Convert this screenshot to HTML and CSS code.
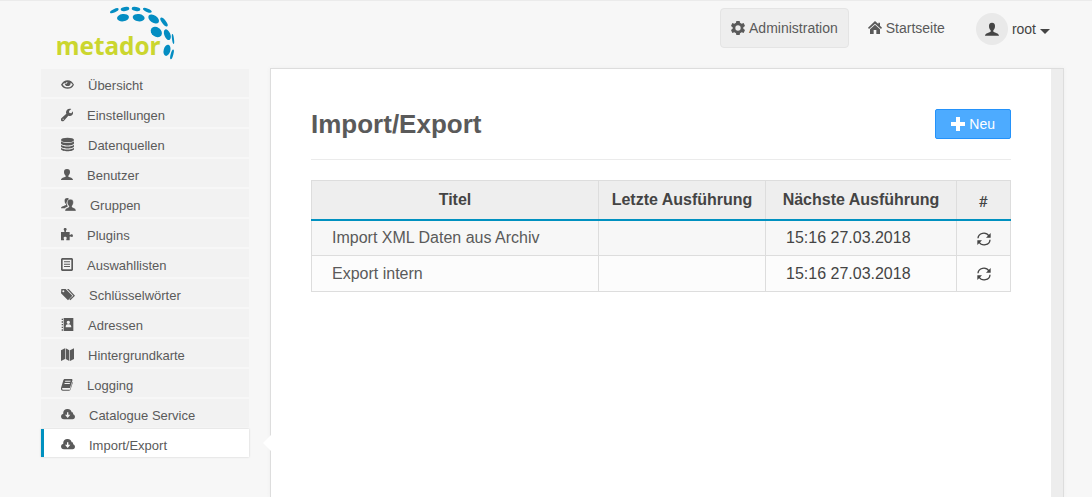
FILE: index.html
```html
<!DOCTYPE html>
<html lang="de">
<head>
    <meta charset="UTF-8">
    <meta name="viewport" content="width=device-width, initial-scale=1.0">
    <title>Metador - Import/Export</title>
    <link rel="stylesheet" href="styles.css">
</head>
<body>
<header class="header">
    <a class="logo" href="#">
        <svg width="120" height="57" viewBox="48 15 360 171">
            <g fill="#048dc2">
                <ellipse cx="223" cy="32" rx="14" ry="5" transform="rotate(-25 223 32)"/>
                <ellipse cx="255" cy="27" rx="13" ry="6" transform="rotate(-10 255 27)"/>
                <ellipse cx="288" cy="27" rx="13" ry="6" transform="rotate(10 288 27)"/>
                <ellipse cx="322" cy="31" rx="14" ry="5" transform="rotate(22 322 31)"/>
                <ellipse cx="249" cy="53" rx="18" ry="11" transform="rotate(-8 249 53)"/>
                <ellipse cx="296" cy="53" rx="18" ry="11" transform="rotate(8 296 53)"/>
                <ellipse cx="341" cy="57" rx="18" ry="11" transform="rotate(35 341 57)"/>
                <ellipse cx="372" cy="66" rx="16" ry="6" transform="rotate(52 372 66)"/>
                <ellipse cx="349" cy="96" rx="18" ry="14" transform="rotate(35 349 96)"/>
                <ellipse cx="382" cy="104" rx="17" ry="9" transform="rotate(68 382 104)"/>
                <ellipse cx="399" cy="117" rx="15" ry="3" transform="rotate(83 399 117)"/>
                <ellipse cx="381" cy="151" rx="17" ry="10" transform="rotate(-75 381 151)"/>
                <ellipse cx="396" cy="163" rx="15" ry="4" transform="rotate(-75 396 163)"/>
            </g>
            <text class="logo-text" x="47" y="166">metador</text>
        </svg>
    </a>
    <nav class="top-nav">
        <a class="top-link active" href="#">
            <svg width="14" height="14" viewBox="0 0 42 42"><path fill="currentColor" fill-rule="evenodd" d="M16 0h10l1 5 5 3 6-2 4 9-5 4v4l5 4-4 9-6-2-5 3-1 5H16l-1-5-5-3-6 2-4-9 5-4v-4l-5-4 4-9 6 2 5-3zM21 13a8 8 0 1 0 0 16 8 8 0 1 0 0-16z"/></svg>
            Administration
        </a>
        <a class="top-link" href="#">
            <svg width="14" height="14" viewBox="0 0 42 42"><path fill="currentColor" d="M21 0l10 9V5h5v9l6 6-3 4L21 8 3 24l-3-4zM21 11l15 14v14H25V27h-8v12H6V25z"/></svg>
            Startseite
        </a>
    </nav>
    <button class="user-menu" type="button">
        <span class="avatar">
            <svg width="14" height="14" viewBox="0 0 42 42"><path fill="currentColor" d="M21 2c7 0 9 5 9 10 0 6-2 10-5 13v4c5 3 16 4 17 12H0c1-8 12-9 17-12v-4c-3-3-5-7-5-13 0-5 2-10 9-10z"/></svg>
        </span>
        root
        <span class="caret"></span>
    </button>
</header>

<div class="wrapper">
    <nav class="sidebar">
        <a class="item" href="#">
            <svg width="13" height="15" viewBox="0 0 39 45"><path fill="currentColor" fill-rule="evenodd" d="M0 23C5 14 12 10 20 10s14 4 19 13c-5 9-11 12-19 12S5 32 0 23zm5 0c4 5 8 8 15 8s11-3 15-8c-2-3-4-5-6-6a9 10 0 1 1-18 0c-2 1-4 3-6 6zm14-8c-4 0-6 3-6 6h3c0-2 1-3 3-3z"/></svg>
            Übersicht
        </a>
        <a class="item" href="#">
            <svg width="12" height="15" viewBox="0 0 36 45"><path fill="currentColor" fill-rule="evenodd" d="M31 6l-7 6 1 6 6 1 5-6c2 10-5 17-14 13L9 41c-6 5-12-1-8-7l15-14C12 11 21 2 31 6zM5 35v3h3v-3z"/></svg>
            Einstellungen
        </a>
        <a class="item" href="#">
            <svg width="13" height="15" viewBox="0 0 39 45"><g fill="currentColor"><ellipse cx="19.500" cy="9" rx="19.500" ry="7"/><path d="M0 13c5 7 34 7 39 0v6c0 9-39 9-39 0zM0 23c5 7 34 7 39 0v5c0 9-39 9-39 0zM0 32c5 7 34 7 39 0v4c0 9-39 9-39 0z"/></g></svg>
            Datenquellen
        </a>
        <a class="item" href="#">
            <svg width="12" height="15" viewBox="0 0 36 45"><path fill="currentColor" d="M18 6c7 0 9 4 9 9 0 5-2 8-5 11v3c5 2 14 3 14 10H0c0-7 9-8 14-10v-3c-3-3-5-6-5-11 0-5 2-9 9-9z"/></svg>
            Benutzer
        </a>
        <a class="item" href="#">
            <svg width="15" height="15" viewBox="0 0 45 45"><g fill="currentColor"><path d="M19 3c-6 0-9 4-8 9 0 4 1 7 4 9v3C11 27 0 27 0 34h12c2-3 6-4 9-6-6-6-6-16 3-22-1-2-3-3-5-3z"/><path d="M28 7c7 0 9 4 9 9 0 5-2 9-4 11v3c4 3 12 3 12 12H12c0-9 8-9 12-12v-3c-3-2-5-6-5-11 0-5 2-9 9-9z" stroke="#f2f2f2" stroke-width="1"/></g></svg>
            Gruppen
        </a>
        <a class="item" href="#">
            <svg width="12" height="15" viewBox="0 0 36 45"><path fill="currentColor" d="M0 15h10c1-4-2-5-2-8 0-5 9-5 9 0 0 3-3 4-2 8h11v9c3 1 3-2 6-2 5 0 5 8 0 8-3 0-3-2-6-1v11H16c-1-4 2-5 1-8-1-4-8-4-9 0-1 3 2 4 1 8H0z"/></svg>
            Plugins
        </a>
        <a class="item" href="#">
            <svg width="12" height="15" viewBox="0 0 36 45"><path fill="currentColor" fill-rule="evenodd" d="M3 3h30l3 3v33l-3 3H3l-3-3V6zm2 5v29h26V8zM9 13h18v3H9zm0 7h18v3H9zm0 7h18v3H9z"/></svg>
            Auswahllisten
        </a>
        <a class="item" href="#">
            <svg width="14" height="15" viewBox="0 0 42 45"><path fill="currentColor" fill-rule="evenodd" d="M1 6h13l20 20-13 14L0 19zm6 4a3 3 0 1 0 0 6 3 3 0 1 0 0-6zM18 6h5l19 20-14 14-3-3 12-11z"/></svg>
            Schlüsselwörter
        </a>
        <a class="item" href="#">
            <svg width="13" height="15" viewBox="0 0 39 45"><path fill="currentColor" fill-rule="evenodd" d="M8 3h29v39H8zm14 8a5 5 0 1 0 0 10 5 5 0 1 0 0-10zM14 31h17c0-6-3-8-7-9h-4c-4 1-6 3-6 9zM2 5h4v4H2zm0 8h4v4H2zm0 8h4v4H2zm0 8h4v4H2zm0 8h4v4H2z"/></svg>
            Adressen
        </a>
        <a class="item" href="#">
            <svg width="13" height="15" viewBox="0 0 39 45"><path fill="currentColor" d="M0 10l12-6v32L0 42zM14 4l11 6v32l-11-6zM27 10l12-6v32l-12 6z"/></svg>
            Hintergrundkarte
        </a>
        <a class="item" href="#">
            <svg width="12" height="15" viewBox="0 0 36 45"><path fill="currentColor" fill-rule="evenodd" d="M11 6h20c3 0 4 2 3 5l-7 22H4c-2 3 0 5 2 5h21l7-22 2-1-7 22c-1 2-2 4-5 4H5c-4 0-6-4-5-8L7 10c1-2 2-4 4-4zm2 5l-1 3h16l1-3zm-2 7l-1 3h16l1-3z"/></svg>
            Logging
        </a>
        <a class="item" href="#">
            <svg width="14" height="15" viewBox="0 0 42 45"><path fill="currentColor" fill-rule="evenodd" d="M9 37C-2 37-3 22 7 20 5 11 13 5 20 6c7 0 11 4 12 10 4 0 5 2 4 6 9 2 7 15-1 15zm9-21v7h-6l8 10 8-10h-6v-7z"/></svg>
            Catalogue Service
        </a>
        <a class="item active" href="#">
            <svg width="14" height="15" viewBox="0 0 42 45"><path fill="currentColor" fill-rule="evenodd" d="M9 37C-2 37-3 22 7 20 5 11 13 5 20 6c7 0 11 4 12 10 4 0 5 2 4 6 9 2 7 15-1 15zm9-21v7h-6l8 10 8-10h-6v-7z"/></svg>
            Import/Export
        </a>
    </nav>

    <main class="content">
        <div class="title-bar">
            <h1>Import/Export</h1>
            <button class="btn" type="button">
                <svg width="14" height="14" viewBox="0 0 14 14"><path fill="currentColor" d="M5 0h4v5h5v4H9v5H5V9H0V5h5z"/></svg>
                Neu
            </button>
        </div>
        <table class="table">
            <thead>
            <tr>
                <th>Titel</th>
                <th class="col-last">Letzte Ausführung</th>
                <th class="col-next">Nächste Ausführung</th>
                <th class="col-action">#</th>
            </tr>
            </thead>
            <tbody>
            <tr>
                <td><a href="#">Import XML Daten aus Archiv</a></td>
                <td></td>
                <td>15:16 27.03.2018</td>
                <td class="action">
                    <button class="refresh" type="button" aria-label="Ausführen">
                        <svg width="14" height="14" viewBox="0 0 42 42"><g fill="none" stroke="currentColor" stroke-width="4"><path d="M3 19C4 2 27-2 36 12"/><path d="M39 23c-1 17-24 21-33 7"/></g><path fill="currentColor" d="M41 3v14H27zM1 39V25h14z"/></svg>
                    </button>
                </td>
            </tr>
            <tr>
                <td><a href="#">Export intern</a></td>
                <td></td>
                <td>15:16 27.03.2018</td>
                <td class="action">
                    <button class="refresh" type="button" aria-label="Ausführen">
                        <svg width="14" height="14" viewBox="0 0 42 42"><g fill="none" stroke="currentColor" stroke-width="4"><path d="M3 19C4 2 27-2 36 12"/><path d="M39 23c-1 17-24 21-33 7"/></g><path fill="currentColor" d="M41 3v14H27zM1 39V25h14z"/></svg>
                    </button>
                </td>
            </tr>
            </tbody>
        </table>
    </main>
</div>
</body>
</html>
```

FILE: styles.css
```css
* {
    box-sizing: border-box;
}
body {
    display: flex;
    flex-direction: column;
    min-height: 100vh;
    margin: 0;
    border-top: 1px solid #ebebeb;
    background-color: #f7f7f7;
    color: #444;
    font-family: "Liberation Sans", Arial, sans-serif;
    font-size: 14px;
}
a {
    color: #5a5a5a;
    text-decoration: none;
}
button {
    font: inherit;
    color: inherit;
    cursor: pointer;
}
svg {
    flex: none;
}

/* header */
.header {
    display: flex;
    align-items: flex-start;
    height: 67px;
    padding: 4px 42px 0 56px;
}
.logo svg {
    display: block;
}
.logo-text {
    fill: #cbd62f;
    font-family: "Noto Sans", sans-serif;
    font-size: 73px;
    font-weight: bold;
}
.top-nav {
    display: flex;
    gap: 8px;
    margin: 3px 20px 0 auto;
}
.top-link {
    display: flex;
    align-items: center;
    gap: 4px;
    height: 40px;
    padding: 0 10px;
    border: 1px solid transparent;
    border-radius: 4px;
}
.top-link.active {
    border-color: #e4e4e4;
    background-color: #eee;
}
.user-menu {
    display: flex;
    align-items: center;
    gap: 4px;
    margin-top: 8px;
    padding: 0;
    border: 0;
    background: none;
}
.avatar {
    display: flex;
    align-items: center;
    justify-content: center;
    width: 32px;
    height: 32px;
    border-radius: 50%;
    background-color: #e9e9e9;
}
.caret {
    margin-top: 4px;
    border: 5px solid transparent;
    border-top-color: currentColor;
    border-bottom: 0;
}

/* layout */
.wrapper {
    display: flex;
    flex: 1;
    gap: 21px;
    padding: 0 28px 0 41px;
}
.sidebar {
    display: flex;
    flex: none;
    flex-direction: column;
    gap: 2px;
    width: 208px;
    padding-top: 1px;
}
.item {
    position: relative;
    display: flex;
    align-items: center;
    gap: 14px;
    height: 28px;
    padding: 4px 0 0 20px;
    background-color: #f2f2f2;
    font-size: 13px;
}
.item svg {
    margin-bottom: 2px;
}
.item.active {
    padding-left: 17px;
    border-left: 3px solid #0091c0;
    background-color: #fff;
    box-shadow: 0 0 2px #ccc;
}
.item.active::after {
    content: "";
    position: absolute;
    top: 6px;
    left: calc(100% + 14px);
    border: 8px solid transparent;
    border-right-color: #fff;
    border-left: 0;
}
.content {
    flex: 1;
    padding: 40px 53px 40px 40px;
    border: 1px solid #ddd;
    border-right: 0;
    border-bottom: 0;
    background-color: #fff;
    box-shadow: inset -1px 0 #ddd, inset -13px 0 #ededed, 0 0 4px #eee;
}

.title-bar {
    display: flex;
    align-items: center;
    justify-content: space-between;
    margin-bottom: 20px;
    padding-bottom: 20px;
    border-bottom: 1px solid #ebebeb;
}
h1 {
    margin: 0;
    color: #5a5a5a;
    font-size: 26px;
    line-height: 30px;
}
.btn {
    display: flex;
    align-items: center;
    gap: 4px;
    height: 30px;
    padding: 0 15px;
    border: 1px solid #2492fa;
    border-radius: 2px;
    background-color: #4dabff;
    color: #fff;
}

/* table */
.table {
    width: 100%;
    border-collapse: collapse;
    table-layout: fixed;
    font-size: 16px;
}
.table th, .table td {
    height: 36px;
    padding: 0 20px;
    border: 1px solid #ddd;
    text-align: left;
}
.table th {
    height: 39px;
    padding: 0;
    border-bottom: 2px solid #0091c0;
    background-color: #eee;
    text-align: center;
}
.table .col-last {
    width: 167px;
}
.table .col-next {
    width: 191px;
}
.table .col-action {
    width: 54px;
    padding-top: 2px;
    font-family: Lato, sans-serif;
    font-weight: normal;
}
.table tbody tr:nth-child(odd) {
    background-color: #f7f7f7;
}
.table tbody tr:nth-child(even) {
    background-color: #fcfcfc;
}
.table .action {
    padding: 0;
    text-align: center;
}
.refresh {
    padding: 0;
    border: 0;
    background: none;
    vertical-align: middle;
}
.refresh svg {
    display: block;
}
```
